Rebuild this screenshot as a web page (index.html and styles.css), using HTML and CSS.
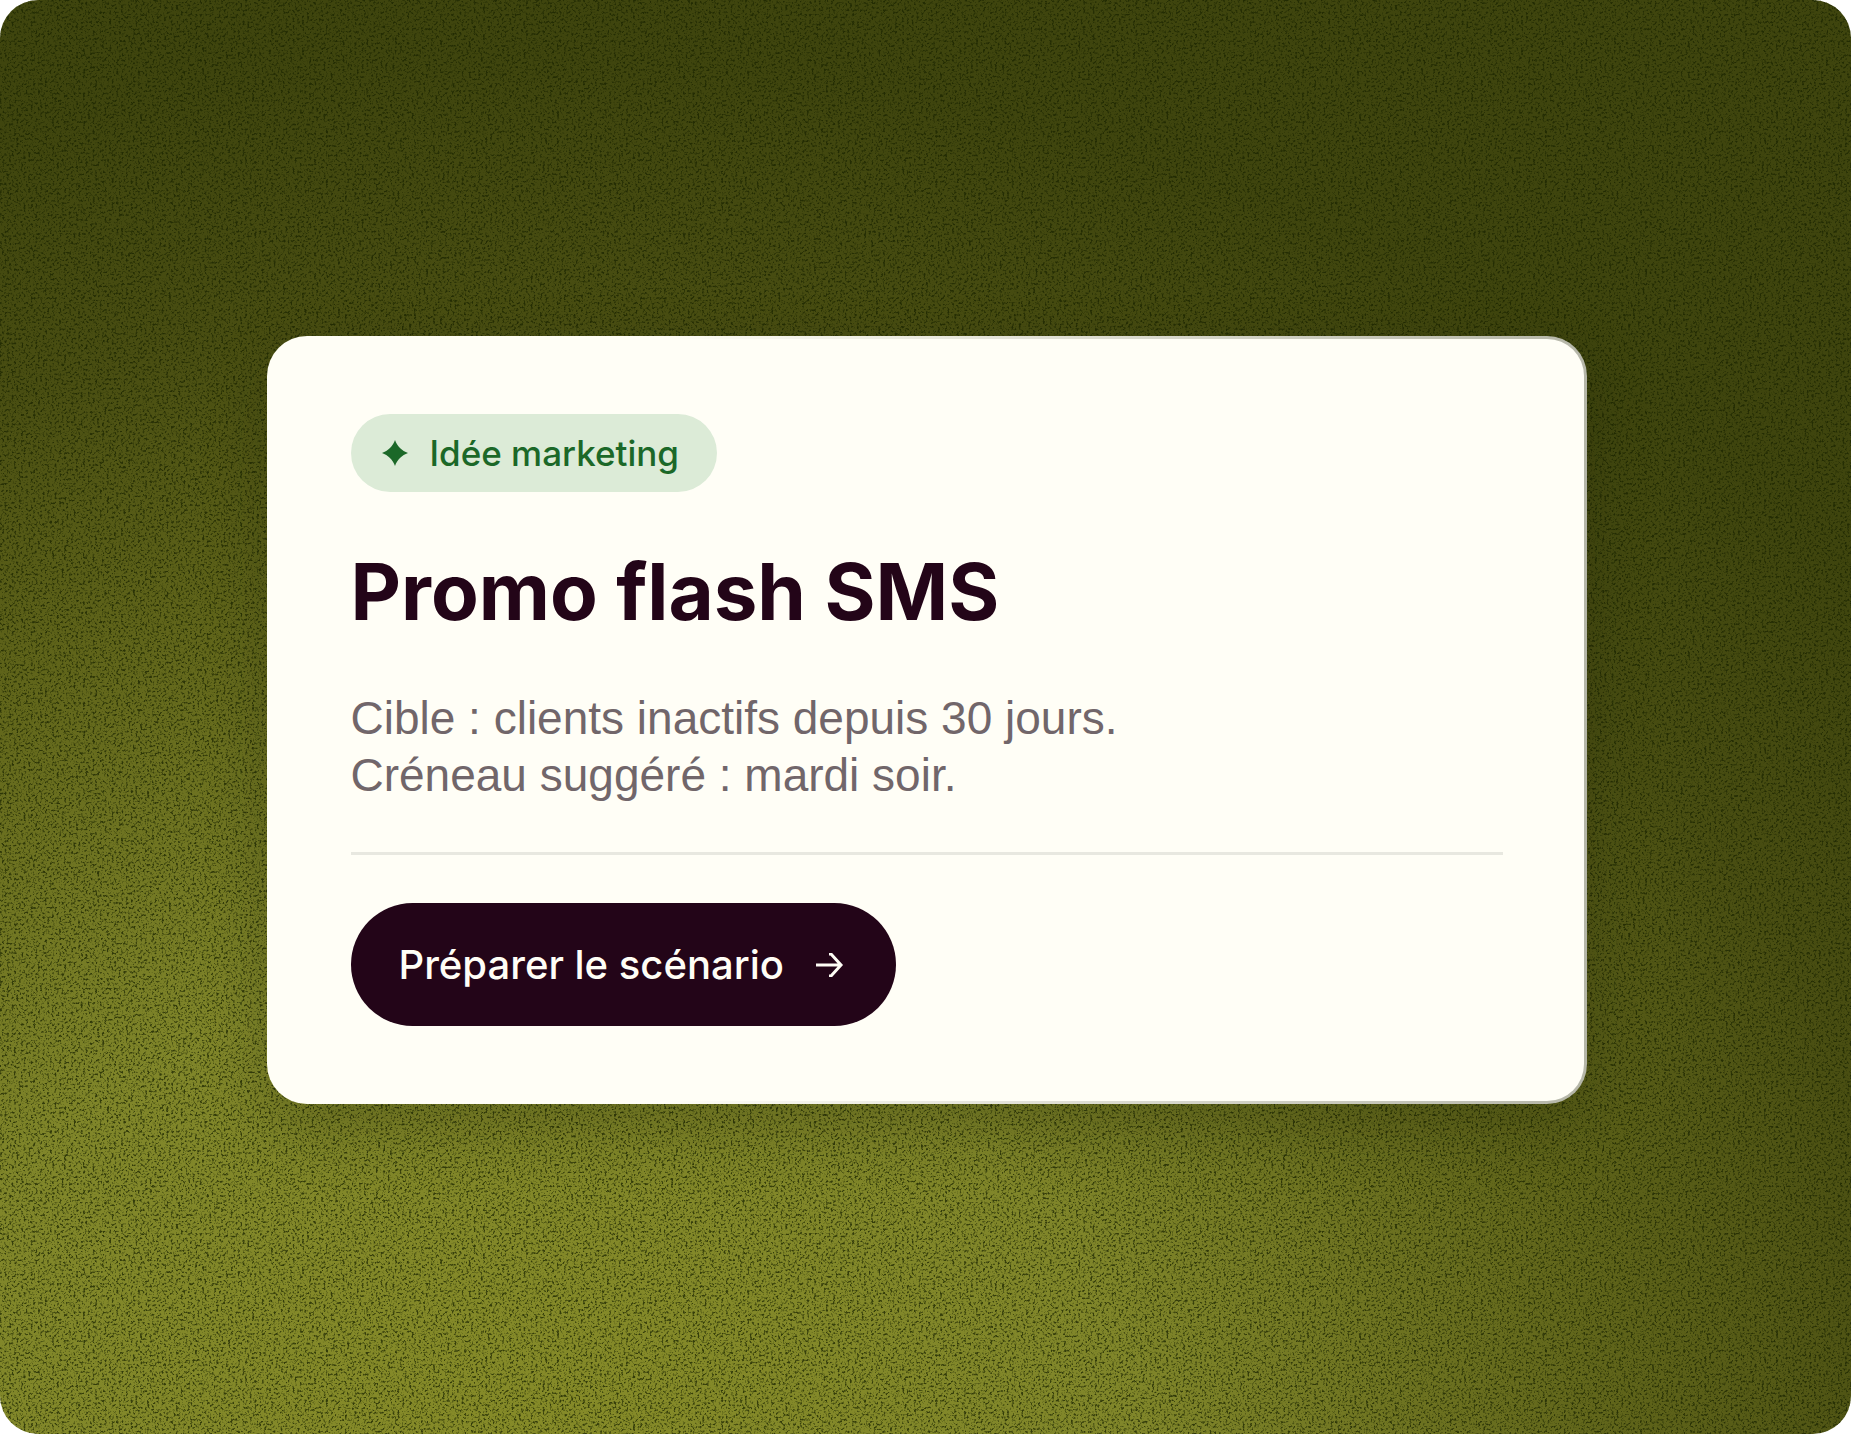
FILE: index.html
```
<!DOCTYPE html>
<html lang="fr">
<head>
    <meta charset="UTF-8">
    <meta name="viewport" content="width=device-width, initial-scale=1.0">
    <title>Promo flash SMS</title>
    <link rel="stylesheet" href="styles.css">
</head>
<body>
    <main class="scene">
        <!-- Grain over the gradient -->
        <svg class="grain" aria-hidden="true">
            <filter id="grain" x="0" y="0" width="100%" height="100%" color-interpolation-filters="sRGB">
                <feTurbulence type="fractalNoise" baseFrequency="0.42" numOctaves="4" seed="4"/>
                <feColorMatrix values="0 0 0 0 0.1  0 0 0 0 0.14  0 0 0 0 0  -4 0 0 0 2"/>
            </filter>
            <rect width="100%" height="100%" filter="url(#grain)"/>
        </svg>

        <article class="card">
            <p class="badge">
                <svg class="badge-icon" viewBox="0 0 26 26" aria-hidden="true">
                    <path d="M13 0C15 6 20 11 26 13C20 15 15 20 13 26C11 20 6 15 0 13C6 11 11 6 13 0Z"/>
                </svg>
                Idée marketing
            </p>
            <h1 class="title">Promo flash SMS</h1>
            <p class="description">Cible : clients inactifs depuis 30 jours.<br>Créneau suggéré : mardi soir.</p>
            <div class="actions">
                <button class="cta" type="button">
                    Préparer le scénario
                    <svg class="cta-icon" viewBox="0 0 28 24" aria-hidden="true">
                        <path d="M0 12H25M13 1H15L25 12L15 23H13"/>
                    </svg>
                </button>
            </div>
        </article>
    </main>
</body>
</html>
```
FILE: styles.css
```
* {
    box-sizing: border-box;
}

body {
    margin: 0;
    background-color: #fff;
    color: #230518;
    font-family: Inter, sans-serif;
}

.scene {
    position: relative;
    display: flex;
    align-items: center;
    justify-content: center;
    min-height: 100vh;
    padding: 46px 40px 40px 42px;
    border-radius: 38px;
    overflow: hidden;
    background: radial-gradient(ellipse 94% 100% at 28% 104%, #868b28 0%, #80862a 36%, #5f641a 64%, #494e12 82%, #3f450e 100%);
}

.grain {
    position: absolute;
    inset: 0;
    width: 100%;
    height: 100%;
    opacity: 0.75;
}

.card {
    position: relative;
    width: 100%;
    max-width: 1320px;
    padding: 75px 81px;
    border: 3px solid transparent;
    border-radius: 40px;
    /* The border fades in from left to right */
    background:
        linear-gradient(#fffef6, #fffef6) padding-box,
        linear-gradient(90deg, #fffef6 30%, #b5b6a8 100%) border-box;
    box-shadow: 0 24px 60px rgba(20, 24, 0, 0.25);
}

.badge {
    display: inline-flex;
    align-items: center;
    gap: 22px;
    height: 78px;
    margin: 0;
    padding: 0 38px 0 31px;
    border-radius: 39px;
    background-color: #dcebd7;
    color: #1b6828;
    font-size: 35px;
    font-weight: 500;
}

.badge-icon {
    width: 26px;
    height: 26px;
    fill: currentColor;
}

.title {
    margin: 48px 0 46px;
    font-size: 78px;
    font-weight: 700;
    line-height: 104px;
}

.description {
    margin: 0;
    color: #71666a;
    font-family: "Liberation Sans", Arial, sans-serif;
    font-size: 46px;
    line-height: 57px;
}

.actions {
    margin-top: 48px;
    padding-top: 48px;
    border-top: 3px solid #e8e8e0;
}

.cta {
    display: flex;
    align-items: center;
    gap: 32px;
    height: 123px;
    padding: 0 52px 0 48px;
    border: none;
    border-radius: 62px;
    background-color: #230518;
    color: #fffef6;
    font-family: inherit;
    font-size: 40px;
    font-weight: 500;
    cursor: pointer;
}

.cta-icon {
    width: 28px;
    height: 24px;
    fill: none;
    stroke: currentColor;
    stroke-width: 3;
}
```
